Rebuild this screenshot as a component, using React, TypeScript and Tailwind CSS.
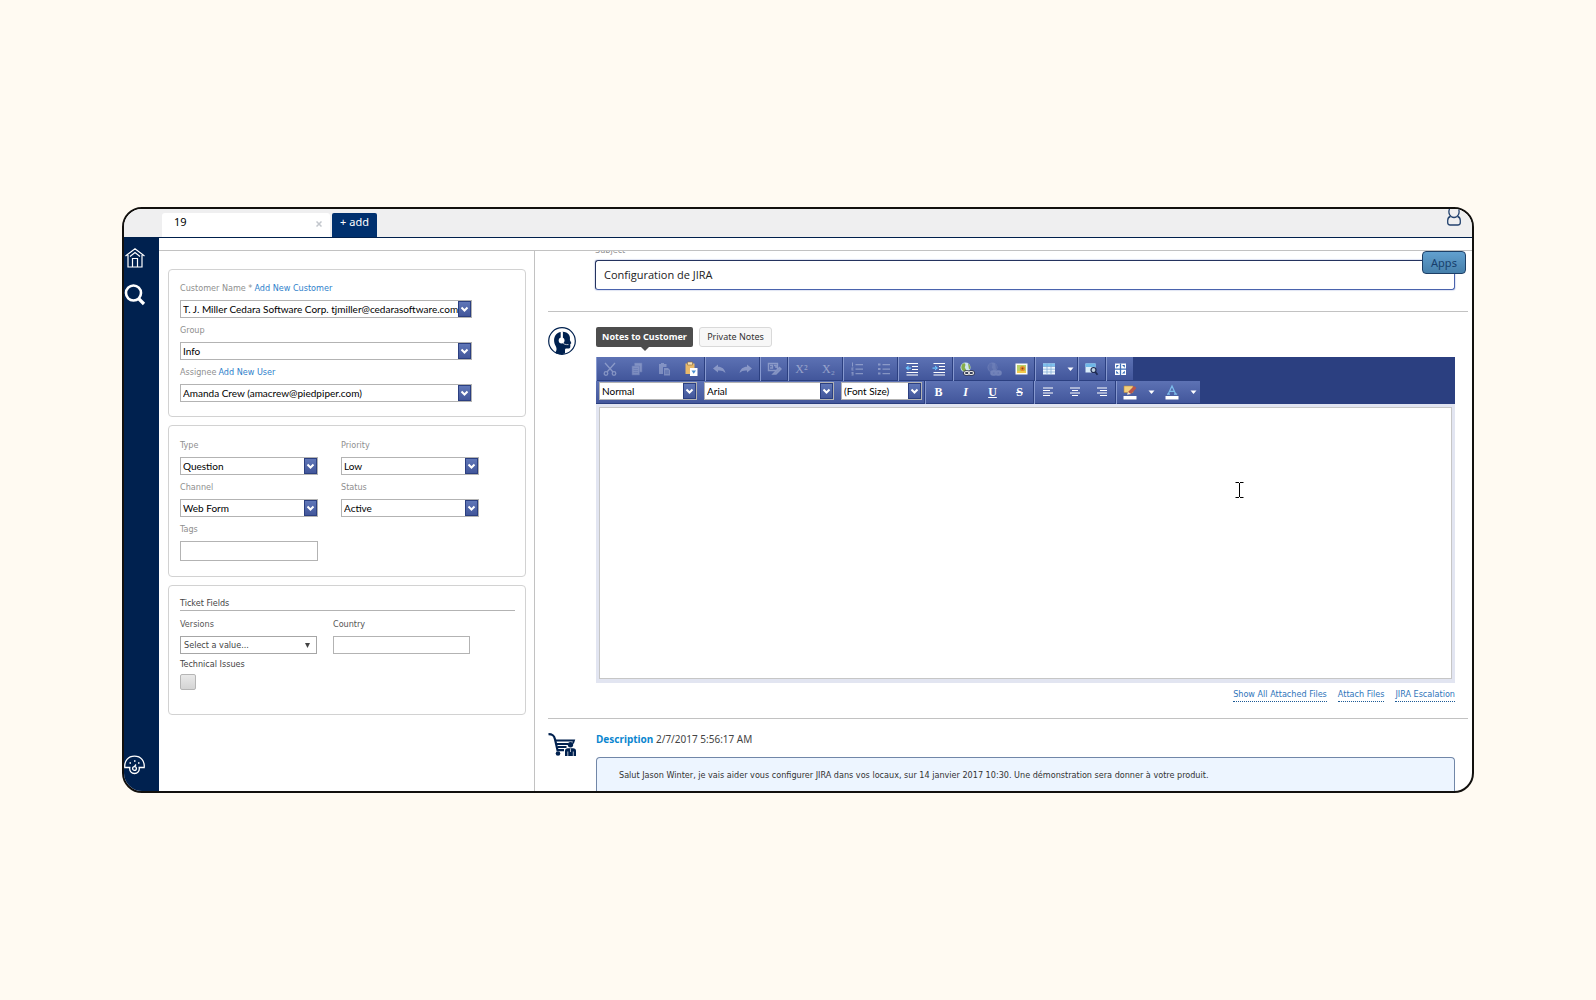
import React, { useId } from "react";

const LABEL = "font-['DejaVu_Sans_Condensed','DejaVu_Sans',sans-serif] text-[9px] leading-[14px]";
const COMBO_TEXT = "font-[Lato,sans-serif] text-[10px] leading-4";

function Chevron() {
  return (
    <svg width="9" height="7" viewBox="0 0 9 7" fill="none" stroke="#fff" strokeWidth="2">
      <path d="M1.500 1.500 4.500 4.500 7.500 1.500" />
    </svg>
  );
}

function Combo({ id, value, label, className = "" }: { id?: string; value: string; label?: string; className?: string }) {
  return (
    <div className={`grid h-[18px] border border-[#b3b3b3] bg-white ${className}`}>
      <select
        id={id}
        aria-label={label}
        className={`col-start-1 row-start-1 h-full w-full min-w-0 appearance-none bg-transparent pl-[2px] text-black outline-none ${COMBO_TEXT}`}
      >
        <option>{value}</option>
      </select>
      <span className="pointer-events-none col-start-1 row-start-1 flex h-full w-[13px] items-center justify-center justify-self-end border border-[#2b3f80] bg-linear-to-b from-[#6077b8] to-[#42569a]">
        <Chevron />
      </span>
    </div>
  );
}

function Field({ label, link, value, className = "" }: { label: string; link?: string; value: string; className?: string }) {
  const id = useId();
  return (
    <div>
      <div className={`text-[#8f8f8f] ${LABEL}`}>
        <label htmlFor={id}>{label}</label>
        {link && (
          <a href="#" className="ml-[2px] text-[#2f7fcb]">
            {link}
          </a>
        )}
      </div>
      <Combo id={id} value={value} className={`mt-[5px] ${className}`} />
    </div>
  );
}

function Panel({ children, className = "" }: { children: React.ReactNode; className?: string }) {
  return <section className={`rounded-[4px] border border-[#d2d2d2] pr-[10px] pl-[11px] ${className}`}>{children}</section>;
}

type Glyph = { name: string; dim?: boolean; wide?: boolean; art: React.ReactNode };

const caret = <path d="M5.5 6.500h6l-3 3.500z" fill="#fff" />;

const scissors = (
  <g fill="none" stroke="#dfe5f5" strokeWidth="1.300">
    <path d="M3 2l8 9M13 2 5 11" />
    <circle cx="4" cy="12.500" r="1.800" />
    <circle cx="12" cy="12.500" r="1.800" />
  </g>
);
const copy = (
  <g fill="#c9d2ea" stroke="#8796c4" strokeWidth=".6">
    <path d="M5.500 2h7.500v9H5.500z" />
    <path d="M3 5h7.500v9H3z" />
    <path d="M4.500 7.500h4.500M4.500 9.500h4.500M4.500 11.500h4.500" />
  </g>
);
const paste = (
  <g fill="#c9d2ea">
    <path d="M3 3h2V2h3v1h2.500v3H7v7H3z" />
    <path d="M8 7h4l2 2v5.500H8z" />
    <path d="M9 10h4M9 12h4" stroke="#5468a8" strokeWidth=".8" />
  </g>
);
const pasteWord = (
  <g>
    <path d="M2.500 2.500h9v10.500h-9z" fill="#e8b96a" />
    <path d="M4.500 1h5v3h-5z" fill="#f7e2b5" stroke="#8a6a3a" strokeWidth=".6" />
    <path d="M7 7h7.500v8H7z" fill="#fff" />
    <path d="M8.500 9.500l2.200 3.200 2.300-3.200z" fill="#4b8fd0" />
  </g>
);
const undo = <path d="M2 7.500 7 3.500v2.300c4 0 6.500 2.200 7.500 6.200-2-2.200-4.500-2.800-7.500-2.500v2z" fill="#dfe5f5" />;
const redo = <path d="M14 7.500 9 3.500v2.300c-4 0-6.500 2.200-7.500 6.200 2-2.200 4.500-2.800 7.500-2.500v2z" fill="#dfe5f5" />;
const format = (
  <g fill="none" stroke="#dfe5f5" strokeWidth="1.400">
    <path d="M2.500 2.500h9v7h-9zM4 4.500h2.500v2.500H4M8 4.500h2v2.500" />
    <path d="M7 13l6.500-6.500 1.500 1.500-5 5z" fill="#c9d2ea" />
  </g>
);
const lines = (n: boolean) => (
  <g fill="#dfe5f5">
    <path d="M6.500 3H14v1.200H6.500zM6.500 7.500H14v1.200H6.500zM6.500 12H14v1.200H6.500z" />
    {n ? (
      <path d="M3 1.500h1v4H3zM2.500 6.500h2v1h-1v1h1v1h-2zM2.500 11h2v3.500h-2v-1h1v-.7h-1z" />
    ) : (
      <path d="M2 2.500h2.500v2H2zM2 7h2.500v2H2zM2 11.500h2.500v2H2z" />
    )}
  </g>
);
const indent = (left: boolean) => (
  <g>
    <path d="M2.500 2.500h11.500M8 5.500h6M8 8.500h6M2.500 11.500h11.500M2.500 14h11.500" stroke="#fff" strokeWidth="1.200" />
    {left ? (
      <path d="M4.500 4.500v5L1.500 7zM4 6.500h3v1.200H4z" fill="#6cc4ff" />
    ) : (
      <path d="M4 4.500v5L7 7zM1.500 6.500h3v1.200h-3z" fill="#6cc4ff" />
    )}
  </g>
);
const globe = (dim: boolean) => (
  <g>
    <circle cx="6.500" cy="6.500" r="5" fill={dim ? "#8e9cc8" : "#cfe6ee"} />
    <path d="M3 3.500c3-3 4 0 3 2s2 2 1 5c-3 1-6-3-4-7zM9 2.500c3 2 3 5 1 6z" fill={dim ? "#6f7fb5" : "#86ad4c"} />
    <g fill="none" stroke={dim ? "#aeb9dc" : "#33384a"} strokeWidth="2.600">
      <rect x="5.500" y="10.500" width="4.500" height="3" rx="1.500" />
      <rect x="10" y="10.500" width="4.500" height="3" rx="1.500" />
    </g>
    <g fill="none" stroke={dim ? "#aeb9dc" : "#e8e8e8"} strokeWidth="1.200">
      <rect x="5.500" y="10.500" width="4.500" height="3" rx="1.500" />
      <rect x="10" y="10.500" width="4.500" height="3" rx="1.500" />
    </g>
  </g>
);
const image = (
  <g>
    <path d="M2.500 2.500h12v11h-12z" fill="#fdfdf5" />
    <path d="M4 4h9v8H4z" fill="#b9d06a" />
    <path d="M4 10h9v2H4z" fill="#f3c94a" />
    <circle cx="9.500" cy="7.500" r="2.600" fill="#e8902c" />
    <circle cx="9.500" cy="7.500" r="1" fill="#8a4b12" />
  </g>
);
const table = (
  <g>
    <path d="M2 2.500h12v11H2z" fill="#eef6fd" />
    <path d="M2 2.500h12v3H2z" fill="#7cc0ee" />
    <path d="M2 5.500h12M2 8.200h12M2 11h12M6 2.500v11M10 2.500v11" stroke="#7aa6d4" strokeWidth=".7" />
  </g>
);
const preview = (
  <g>
    <path d="M1.500 2.500h10v9h-10z" fill="#d9edf9" />
    <path d="M1.500 2.500h10v3.500h-10z" fill="#6fb8e8" />
    <circle cx="9.500" cy="9" r="2.500" fill="#bccddd" stroke="#1f2b52" strokeWidth="1.200" />
    <path d="M11.300 11l2.200 2.800" stroke="#1f2b52" strokeWidth="1.800" />
  </g>
);
const full = (
  <g>
    <path d="M3 2.500h11v11.500H3z" fill="#fff" />
    <path d="M8.500 2.500v11.500M3 8.200h11" stroke="#3f6fb8" strokeWidth="1.300" />
    <path d="M4.200 4H7L4.200 6.800zM12.800 4H10l2.800 2.800zM4.200 12.500H7L4.200 9.700zM12.800 12.500H10l2.800-2.800z" fill="#2f66b5" />
  </g>
);
const strokeLines = (d: string) => <path d={d} stroke="#fff" strokeWidth="1.200" />;
const highlighter = (
  <g>
    <path d="M2 2h9v6.500H2z" fill="#f2cf7c" stroke="#b98a3c" strokeWidth=".6" />
    <path d="M6 8l6-6 2.500 2L9 10z" fill="#b9564a" />
    <path d="M6 8l3 2-4 .8z" fill="#f7e3c4" />
    <path d="M1.500 12h13v3.500h-13z" fill="#fff" />
  </g>
);
const fontColor = (
  <g>
    <path d="M1.500 12h13v3.500h-13z" fill="#fff" />
    <path d="M4.200 10 8 2l3.600 8M5.600 7.300h4.700M3 10.200h3M10 10.200h3.200" fill="none" stroke="#7dbdec" strokeWidth="1.200" />
  </g>
);

const ROW_ONE: Glyph[][] = [
  [
    { name: "Cut", dim: true, art: scissors },
    { name: "Copy", dim: true, art: copy },
    { name: "Paste", dim: true, art: paste },
    { name: "Paste from Word", art: pasteWord },
  ],
  [
    { name: "Undo", dim: true, art: undo },
    { name: "Redo", dim: true, art: redo },
  ],
  [{ name: "Remove format", dim: true, art: format }],
  [
    { name: "Superscript", dim: true, art: "X²" },
    { name: "Subscript", dim: true, art: "X₂" },
  ],
  [
    { name: "Numbered list", dim: true, art: lines(true) },
    { name: "Bulleted list", dim: true, art: lines(false) },
  ],
  [
    { name: "Outdent", art: indent(true) },
    { name: "Indent", art: indent(false) },
  ],
  [
    { name: "Insert link", art: globe(false) },
    { name: "Remove link", dim: true, art: globe(true) },
    { name: "Insert image", art: image },
  ],
  [
    { name: "Insert table", art: table },
    { name: "Table options", wide: true, art: caret },
  ],
  [{ name: "Preview", art: preview }],
  [{ name: "Full screen", art: full }],
];

const ROW_TWO: Glyph[][] = [
  [
    { name: "Bold", art: <span className="font-bold">B</span> },
    { name: "Italic", art: <span className="font-bold italic">I</span> },
    { name: "Underline", art: <span className="font-bold underline">U</span> },
    { name: "Strikethrough", art: <span className="font-bold line-through">S</span> },
  ],
  [
    { name: "Align left", art: strokeLines("M3 4h10M3 6.500h7M3 9h10M3 11.500h7") },
    { name: "Align center", art: strokeLines("M3 4h10M5 6.500h6M3 9h10M5 11.500h6") },
    { name: "Align right", art: strokeLines("M3 4h10M6 6.500h7M3 9h10M6 11.500h7") },
  ],
  [
    { name: "Highlight color", art: highlighter },
    { name: "Highlight options", wide: true, art: caret },
    { name: "Font color", art: fontColor },
    { name: "Font color options", wide: true, art: caret },
  ],
];

const TEXT_GLYPHS = ["Superscript", "Subscript", "Bold", "Italic", "Underline", "Strikethrough"];

function ToolGroup({ items, className = "" }: { items: Glyph[]; className?: string }) {
  return (
    <div
      className={`flex h-full border-l border-[#8799cf] bg-linear-to-b from-[#5d72b4] to-[#41559a] shadow-[inset_-1px_-1px_0_#2b3f80] ${className}`}
    >
      {items.map((g) => (
        <button
          key={g.name}
          type="button"
          aria-label={g.name}
          className={`flex items-center justify-center pr-[2px] font-['Liberation_Serif',serif] text-[12px] leading-4 text-white ${g.wide ? "w-[15px]" : "w-[27px]"} ${g.dim ? "opacity-40" : ""}`}
        >
          {TEXT_GLYPHS.includes(g.name) ? (
            g.art
          ) : (
            <svg className="shrink-0" width="16" height="16" viewBox="0 0 16 16">
              {g.art}
            </svg>
          )}
        </button>
      ))}
    </div>
  );
}

function Header() {
  return (
    <header className="flex h-[29px] items-end border-b border-[#00204c] bg-[#efeff0] pl-[38px]">
      <div className="flex h-6 w-[168px] items-center justify-between rounded-t-[3px] bg-white pr-2 pl-3">
        <span className="pb-[6px] font-['Noto_Sans',sans-serif] text-[11px] leading-4 text-black">19</span>
        <button type="button" aria-label="Close tab" className="pb-[2px]">
          <svg width="6" height="6" viewBox="0 0 6 6" stroke="#c3c7cd" strokeWidth="1.500">
            <path d="M.5.5l5 5M5.500.5l-5 5" />
          </svg>
        </button>
      </div>
      <button
        type="button"
        className="ml-[2px] h-6 w-[45px] rounded-t-[2px] bg-[#00306e] pb-[6px] font-['Noto_Sans',sans-serif] text-[11px] leading-4 text-white"
      >
        + add
      </button>
      <button type="button" aria-label="Account" className="mr-[11px] ml-auto self-start">
        <svg width="14" height="17" viewBox="0 0 14 17" fill="none" stroke="#24436f" strokeWidth="1.300">
          <path d="M2.500 0C.8 4 3 8.500 7 8.500S13.200 4 11.500 0" />
          <path d="M3.500 7.500C1.500 8 .7 9.500.7 11.500v2c0 1.500 1 2.500 2.500 2.500h7.600c1.500 0 2.500-1 2.500-2.500v-2c0-2-.8-3.500-2.800-4" />
        </svg>
      </button>
    </header>
  );
}

function Rail() {
  return (
    <nav className="flex w-[35px] shrink-0 flex-col items-start bg-[#00214f] pt-[10px] pb-4">
      <a href="#" aria-label="Home" className="ml-[1px]">
        <svg width="20" height="20" viewBox="0 0 20 20" fill="none" stroke="#fff" strokeWidth="1.200">
          <path d="M.5 8 10 .8 19.500 8M3 7v12h14V7M7.500 19v-8.500h5V19M5 8.500 10 4.500l5 4" />
        </svg>
      </a>
      <a href="#" aria-label="Search" className="mt-4">
        <svg width="22" height="22" viewBox="0 0 22 22" fill="none" stroke="#fff">
          <circle cx="9.500" cy="9" r="7.500" strokeWidth="2.600" />
          <path d="M14.500 14.500l5.500 5.500" strokeWidth="3.200" />
        </svg>
      </a>
      <a href="#" aria-label="Dashboard" className="mt-auto">
        <svg width="21" height="20" viewBox="0 0 21 20" fill="none" stroke="#fff" strokeWidth="1.300">
          <path d="M.8 12.500C.2 6 4 1.200 10.500 1.200S20.800 6 20.200 12.500h-5c.6 3.500-1.700 6-4.700 6s-5.300-2.500-4.700-6z" />
          <circle cx="10.500" cy="13.500" r="1.900" />
          <path d="M10.500 11.500l1.500-2" />
          <path d="M5.500 8h1.500M10 6h1.500M14 8h1.500" strokeWidth="1.500" />
        </svg>
      </a>
    </nav>
  );
}

function Sidebar() {
  return (
    <aside className="flex w-[376px] shrink-0 flex-col gap-2 border-r border-[#c2c2c2] pt-[18px] pr-2 pb-8 pl-[9px]">
      <Panel className="flex flex-col gap-[5px] pt-[11px] pb-[14px]">
        <Field label="Customer Name *" link="Add New Customer" value="T. J. Miller Cedara Software Corp. tjmiller@cedarasoftware.com" className="w-[292px]" />
        <Field label="Group" value="Info" className="w-[292px]" />
        <Field label="Assignee" link="Add New User" value="Amanda Crew (amacrew@piedpiper.com)" className="w-[292px]" />
      </Panel>

      <Panel className="pt-3 pb-[15px]">
        <div className="grid grid-cols-[138px_138px] gap-x-[23px] gap-y-[5px]">
          <Field label="Type" value="Question" />
          <Field label="Priority" value="Low" />
          <Field label="Channel" value="Web Form" />
          <Field label="Status" value="Active" />
          <div>
            <label htmlFor="tags" className={`block text-[#8f8f8f] ${LABEL}`}>
              Tags
            </label>
            <input id="tags" className="mt-[5px] block h-5 w-full border border-[#b3b3b3] bg-white px-1 text-[11px] outline-none" />
          </div>
        </div>
      </Panel>

      <Panel className="pt-[10px] pb-6">
        <h2 className={`border-b border-[#b3b3b3] text-[#444] ${LABEL}`}>Ticket Fields</h2>
        <div className="mt-[6px] grid grid-cols-[137px_137px] gap-x-4 gap-y-[3px]">
          <div>
            <label htmlFor="versions" className={`block text-[#555] ${LABEL}`}>
              Versions
            </label>
            <div className="mt-[5px] grid h-[18px] items-center border border-[#a6a6a6]">
              <select id="versions" className={`col-start-1 row-start-1 w-full appearance-none bg-transparent pl-[3px] text-[#444] outline-none ${LABEL}`}>
                <option>Select a value...</option>
              </select>
              <svg className="pointer-events-none col-start-1 row-start-1 mr-[6px] justify-self-end" width="5" height="5" viewBox="0 0 5 5">
                <path d="M0 0h5L2.500 5z" fill="#444" />
              </svg>
            </div>
          </div>
          <div>
            <label htmlFor="country" className={`block text-[#555] ${LABEL}`}>
              Country
            </label>
            <input id="country" className="mt-[5px] block h-[18px] w-full border border-[#b3b3b3] px-1 text-[10px] outline-none" />
          </div>
          <div>
            <label htmlFor="tech" className={`block text-[#444] ${LABEL}`}>
              Technical Issues
            </label>
            <input
              id="tech"
              type="checkbox"
              className="mt-[3px] block size-4 appearance-none rounded-[2px] border border-[#b5b5b5] bg-linear-to-b from-[#e9e9e9] to-[#d4d4d4]"
            />
          </div>
        </div>
      </Panel>
    </aside>
  );
}

function Editor() {
  return (
    <div>
      <div role="toolbar" aria-label="Formatting" className="bg-[#2b3f80]">
        <div className="flex h-6">
          {ROW_ONE.map((g) => (
            <ToolGroup key={g[0].name} items={g} />
          ))}
        </div>
        <div className="flex h-[23px]">
          <div className="flex h-full items-start gap-[7px] bg-linear-to-b from-[#5d72b4] to-[#41559a] px-[3px] pt-[1px] shadow-[inset_-1px_-1px_0_#2b3f80]">
            <Combo label="Paragraph style" value="Normal" className="w-[98px]" />
            <Combo label="Font" value="Arial" className="w-[130px]" />
            <Combo label="Font size" value="(Font Size)" className="w-[81px]" />
          </div>
          {ROW_TWO.map((g) => (
            <ToolGroup key={g[0].name} items={g} className="pb-[2px]" />
          ))}
        </div>
      </div>
      <div className="relative border-[3px] border-b-4 border-[#e2e5f1]">
        <textarea aria-label="Notes to Customer" className="block h-[272px] w-full resize-none border border-[#c6c6c6] bg-white p-2 text-[12px] outline-none" />
        <svg className="absolute top-[75px] right-[208px]" width="9" height="16" viewBox="0 0 9 16" fill="none" stroke="#000" strokeWidth="1">
          <path d="M.5.5H4M5 .5h3.500M4.500 1v14M.5 15.500H4M5 15.500h3.500" />
        </svg>
      </div>
    </div>
  );
}

function AgentIcon() {
  return (
    <svg width="28" height="28" viewBox="0 0 28 28">
      <circle cx="14" cy="14" r="13.300" fill="#fff" stroke="#00214f" strokeWidth="1.200" />
      <path
        d="M7 25.800c1.800-2 2-4.300.8-6.600C5.500 15.500 5.300 10 8.500 7 12 4 18.500 4 21 7.800c1.200 2 1 3.800.9 5.200l1.300 2.800c.2.700-.2 1-.9 1.100v2.800c-.2 1.700-1.200 2-3.800 1.800-1.200 0-1.500.7-1.500 1.700v3.300c-3.500 1.400-7 .9-10-.7z"
        fill="#00214f"
      />
      <path d="M13.800 4.500v8" fill="none" stroke="#fff" strokeWidth="2.200" />
      <circle cx="13.600" cy="13.500" r="2.900" fill="#fff" />
      <path d="M14.500 15.500c1 1.700 3 2.300 6 2.100" fill="none" stroke="#fff" strokeWidth=".7" />
    </svg>
  );
}

function CartIcon() {
  return (
    <svg width="28" height="24" viewBox="0 0 28 24" fill="none" stroke="#00214f">
      <path d="M.5 1.200c4 0 5.500 1 6.500 5l2.500 11H16" strokeWidth="2.200" />
      <path d="M8 7.500h18L25 10.500M9 11h11M9.500 14h9" strokeWidth="1.800" />
      <circle cx="10" cy="20.500" r="2.300" fill="#00214f" stroke="none" />
      <circle cx="22.500" cy="11.800" r="2.700" fill="#00214f" stroke="none" />
      <path d="M17 23v-5c0-1.800 1-2.800 3-2.800h5c2 0 3 1 3 2.800v5z" fill="#00214f" stroke="none" />
      <path d="M19.800 18.500V23M25.300 18.500V23M22.500 15.500v3.500" stroke="#fff" strokeWidth=".7" />
    </svg>
  );
}

function Conversation() {
  return (
    <main className="relative flex min-w-0 flex-1 flex-col pr-1 pl-[13px]">
      <button
        type="button"
        className="absolute top-0 right-[6px] h-[23px] w-11 rounded-[4px] border border-[#1d3f66] bg-linear-to-b from-[#62a0cf] to-[#4680ab] font-['Noto_Sans',sans-serif] text-[11px] leading-4 text-[#173f6c]"
      >
        Apps
      </button>
      <div className="pr-[13px] pl-[47px]">
        <div className="flex h-[9px] items-end overflow-hidden">
          <label htmlFor="subject" className={`pb-[3px] text-[#8f8f8f] ${LABEL}`}>
            Subject
          </label>
        </div>
        <input
          id="subject"
          defaultValue="Configuration de JIRA"
          className="block h-[30px] w-full rounded-[3px] border border-[#4a63ad] border-t-[#24335f] border-l-[#24335f] px-2 pb-[2px] font-['Open_Sans',sans-serif] text-[11px] text-[#222] shadow-[0_0_1px_1px_#dfe4f3] outline-none"
        />
      </div>

      <section className="mt-[21px] flex gap-5 border-t border-[#c2c2c2] pt-[15px] pr-[13px]">
        <div className="shrink-0">
          <AgentIcon />
        </div>
        <div className="min-w-0 flex-1">
          <div className="flex gap-[6px] font-['Noto_Sans',sans-serif] text-[9px] leading-[18px]">
            <div className="flex flex-col items-center">
              <button type="button" className="h-5 w-[97px] rounded-[2px] bg-[#4d4d4d] font-bold text-white">
                Notes to Customer
              </button>
              <span className="h-0 w-0 border-x-[4px] border-t-[4px] border-x-transparent border-t-[#4d4d4d]" />
            </div>
            <button type="button" className="h-5 w-[73px] rounded-[3px] border border-[#d9d9d9] bg-[#f7f7f7] text-[#333]">
              Private Notes
            </button>
          </div>
          <div className="mt-[6px]">
            <Editor />
          </div>
          <div className={`mt-1 flex justify-end gap-[11px] text-[#2f75ba] ${LABEL}`}>
            <a href="#" className="border-b border-dotted border-[#1c5a95]">Show All Attached Files</a>
            <a href="#" className="border-b border-dotted border-[#1c5a95]">Attach Files</a>
            <a href="#" className="border-b border-dotted border-[#1c5a95]">JIRA Escalation</a>
          </div>
        </div>
      </section>

      <section className="mt-4 flex flex-1 gap-5 border-t border-[#c2c2c2] pt-3 pr-[13px]">
        <div className="shrink-0 pt-[2px]">
          <CartIcon />
        </div>
        <div className="flex min-w-0 flex-1 flex-col">
          <p className="font-['Noto_Sans',sans-serif] text-[10px] leading-4 text-[#444]">
            <strong className="text-[#0b86cf]">Description</strong> 2/7/2017 5:56:17 AM
          </p>
          <div className="mt-[10px] flex-1 rounded-t-[4px] border border-b-0 border-[#7187a8] bg-[#edf5ff] pt-[10px] pr-4 pb-[9px] pl-[22px]">
            <p className={`text-[#333] ${LABEL}`}>
              Salut Jason Winter, je vais aider vous configurer JIRA dans vos locaux, sur 14 janvier 2017 10:30. Une démonstration sera donner à votre produit.
            </p>
          </div>
        </div>
      </section>
    </main>
  );
}

export default function App() {
  return (
    <div className="flex min-h-screen items-center bg-[#fffaf2] px-[122px]">
      <div className="w-full overflow-hidden rounded-[20px] border-2 border-[#12100e] bg-white">
        <Header />
        <div className="flex">
          <Rail />
          <div className="min-w-0 flex-1 pt-3">
            <div className="flex border-t border-[#c2c2c2]">
              <Sidebar />
              <Conversation />
            </div>
          </div>
        </div>
      </div>
    </div>
  );
}
